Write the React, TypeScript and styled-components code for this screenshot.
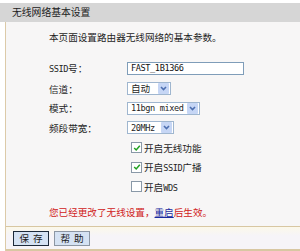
import React from 'react';
import styled, { createGlobalStyle } from 'styled-components';

const Global = createGlobalStyle`
  html, body {
    margin: 0;
    padding: 0;
    background: #fff;
  }
  body {
    font-family: "Noto Sans CJK SC", "DejaVu Sans", sans-serif;
    font-size: 9.6px;
    color: #1e1e1e;
  }
`;

const Page = styled.div`
  width: 300px;
  height: 251px;
  padding-top: 3px;
  box-sizing: border-box;
  background: #fff;
  display: flex;
  flex-direction: column;
  overflow: hidden;
`;

const TitleBar = styled.div`
  height: 19px;
  line-height: 19px;
  background: #d6d6d6;
  padding-left: 12px;
  font-size: 9.8px;
  color: #202020;
`;

const Panel = styled.div`
  margin-left: 5px;
  border-left: 1px solid #dccaa8;
  background: #f7f6f6;
  display: flex;
  flex-direction: column;
  flex: 1;
`;

const Body = styled.div`
  padding: 9px 0 0 43px;
  flex: 1;
`;

const Intro = styled.div`
  height: 12px;
  line-height: 12px;
  margin-bottom: 16px;
`;

const Form = styled.div`
  display: grid;
  grid-template-columns: 78px 1fr;
  grid-auto-rows: 19.7px;
  align-items: center;
`;

const Label = styled.div`
  line-height: 12px;
  white-space: nowrap;
`;

const Ascii = styled.span`
  font-family: "DejaVu Sans Mono", "Liberation Mono", monospace;
  font-size: 8.6px;
  letter-spacing: -0.4px;
  white-space: pre;
`;

const TextInput = styled.div`
  width: 112px;
  height: 11px;
  border: 1px solid #7f9db9;
  background: #fff;
  padding-left: 3px;
  line-height: 11px;
  font-family: "DejaVu Sans Mono", "Liberation Mono", monospace;
  font-size: 8.6px;
  letter-spacing: -0.4px;
  color: #111;
`;

const Select = styled.div<{ $w: number }>`
  width: ${(p) => p.$w}px;
  height: 11px;
  border: 1px solid #9fb6cf;
  background: #fff;
  display: flex;
  align-items: center;
  justify-content: space-between;
  padding: 0 1px 0 3px;
  box-sizing: content-box;
  font-size: 9.6px;
  line-height: 11px;
  white-space: nowrap;
`;

const Arrow = styled.span`
  width: 11px;
  height: 11px;
  flex: none;
  background: #c6d6f5;
  border-radius: 1px;
  display: flex;
  align-items: center;
  justify-content: center;
`;

const CheckRow = styled.div`
  display: flex;
  align-items: center;
  gap: 2px;
  margin-left: 4px;
  white-space: nowrap;
`;

const Box = styled.span`
  width: 9px;
  height: 9px;
  border: 1px solid #8a99a8;
  background: #fff;
  display: flex;
  align-items: center;
  justify-content: center;
`;

const Notice = styled.div`
  margin-top: 9px;
  line-height: 12px;
  color: #d02020;
`;

const Link = styled.span`
  color: #1a2aa0;
  text-decoration: underline;
`;

const Footer = styled.div`
  height: 22px;
  border-top: 1px solid #d8c7a2;
  border-bottom: 2px solid #d8c7a2;
  background: linear-gradient(#fbf8ea, #f6f4f8 40%);
  display: flex;
  align-items: center;
  gap: 5px;
  padding-left: 7px;
`;

const Button = styled.div<{ $primary?: boolean }>`
  width: 34px;
  height: 13px;
  line-height: 13px;
  text-align: center;
  letter-spacing: 4px;
  text-indent: 4px;
  background: #d5e2f3;
  border: 1px solid ${(p) => (p.$primary ? '#1d2a3a' : '#8c96a3')};
  font-size: 9.6px;
  color: #1b1b1b;
`;

const Chevron = () => (
  <svg width="7" height="5" viewBox="0 0 7 5">
    <path d="M1 1 L3.5 3.5 L6 1" stroke="#4d6fb0" strokeWidth="1.6" fill="none" />
  </svg>
);

const Tick = () => (
  <svg width="8" height="8" viewBox="0 0 8 8">
    <path d="M1.2 4 L3.2 6 L6.8 1.8" stroke="#21a121" strokeWidth="1.5" fill="none" />
  </svg>
);

const Dropdown: React.FC<{ w: number; children: React.ReactNode }> = ({ w, children }) => (
  <Select $w={w}>
    <span>{children}</span>
    <Arrow>
      <Chevron />
    </Arrow>
  </Select>
);

const Check: React.FC<{ on?: boolean; children: React.ReactNode }> = ({ on, children }) => (
  <CheckRow>
    <Box>{on && <Tick />}</Box>
    <span>{children}</span>
  </CheckRow>
);

export default function App() {
  return (
    <>
      <Global />
      <Page>
        <TitleBar>无线网络基本设置</TitleBar>
        <Panel>
          <Body>
            <Intro>本页面设置路由器无线网络的基本参数。</Intro>
            <Form>
              <Label>
                <Ascii>SSID</Ascii>号：
              </Label>
              <TextInput>FAST_1B1366</TextInput>
              <Label>信道：</Label>
              <Dropdown w={38}>自动</Dropdown>
              <Label>模式：</Label>
              <Dropdown w={67}>
                <Ascii>11bgn mixed</Ascii>
              </Dropdown>
              <Label>频段带宽：</Label>
              <Dropdown w={41}>
                <Ascii>20MHz</Ascii>
              </Dropdown>
              <span />
              <Check on>开启无线功能</Check>
              <span />
              <Check on>
                开启<Ascii>SSID</Ascii>广播
              </Check>
              <span />
              <Check>
                开启<Ascii>WDS</Ascii>
              </Check>
            </Form>
            <Notice>
              您已经更改了无线设置，<Link>重启</Link>后生效。
            </Notice>
          </Body>
          <Footer>
            <Button $primary>保存</Button>
            <Button>帮助</Button>
          </Footer>
        </Panel>
      </Page>
    </>
  );
}
